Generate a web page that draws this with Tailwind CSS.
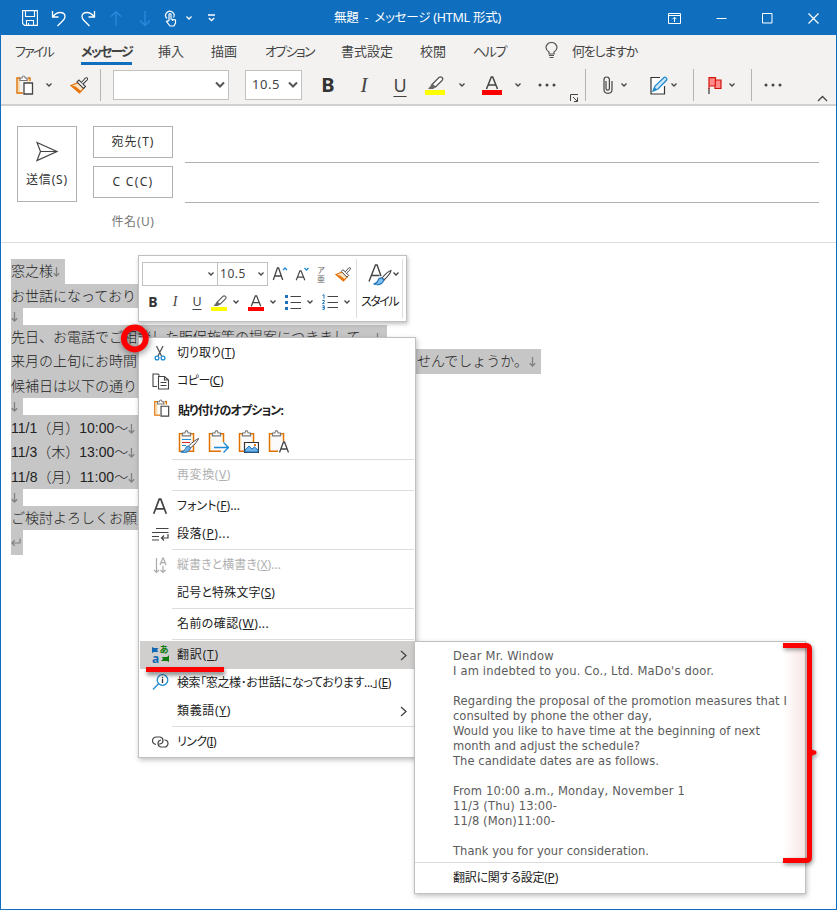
<!DOCTYPE html>
<html lang="ja">
<head>
<meta charset="utf-8">
<title>無題 - メッセージ (HTML 形式)</title>
<script src="https://cdn.jsdelivr.net/npm/@tailwindcss/browser@4"></script>
</head>
<body class="bg-white">
<svg class="hidden">
  <symbol id="caret" viewBox="0 0 8 6"><path d="M1.500 1.500L4 4l2.500-2.500" fill="none" stroke="currentColor" stroke-width="1.300"/></symbol>
  <symbol id="bigcaret" viewBox="0 0 10 8"><path d="M1 1.500L5 5.500l4-4" fill="none" stroke="#555" stroke-width="2"/></symbol>
  <symbol id="painter" viewBox="0 0 18 17"><path d="M1 8.500l7.500-3 5.500 5.500-4.500 5z" fill="#fde3c3" stroke="#e07000" stroke-width="1.200"/><path d="M1 8.500l4.500 1L11 14l-1.500 2z" fill="#e8750a"/><path d="M7 5l2-2 6.500 6.500-2 2z" fill="#fff" stroke="#444" stroke-width="1.100"/><path d="M11.500 5.500l4-4.500q1.500-.5 2 .2.300.7-.3 1.600L13 7" fill="#fff" stroke="#444" stroke-width="1.100"/></symbol>
  <symbol id="paste" viewBox="0 0 19 20"><path d="M5 3H2v15h6M13 3h2v3" fill="none" stroke="#e07000" stroke-width="1.400"/><path d="M3 4h2v13H3zM12 4h2v3h-2z" fill="#fbdcae"/><path d="M5 5.500V3h2q.3-2 1.600-2t1.600 2H12v2.500z" fill="#fff" stroke="#777" stroke-width="1.200"/><path d="M9 8h8.500v11H9z" fill="#fff" stroke="#444" stroke-width="1.300"/></symbol>
  <symbol id="clip" viewBox="0 0 22 24"><path d="M2.500 3.700h14v17.600h-14z" fill="#fafafa" stroke="#e07000" stroke-width="1.500"/><path d="M3.700 4.500V20M15.300 4.500V20" stroke="#fbdcae"/><path d="M5.500 5.800V3h2.400Q8.200.7 9.500.7T11.100 3h2.400v2.800z" fill="#fff" stroke="#777" stroke-width="1.200"/></symbol>
  <symbol id="marker" viewBox="0 0 20 14"><path d="M7 8.500L14 1.500q1.500-1.200 3 0t0 3L10.500 11z" fill="#fff" stroke="#555" stroke-width="1.300"/><path d="M7 8l3.500 3.200L8 13H3z" fill="#666"/></symbol>
  <symbol id="fontA" viewBox="0 0 14 14"><path d="M1.500 13L6.300 1h1.400L12.500 13M3.200 9h7.600" fill="none" stroke="#444" stroke-width="1.500"/></symbol>
</svg>

<div class="relative flex h-[910px] w-[837px] flex-col overflow-hidden border-x border-b border-[#106ebe] bg-white font-['Noto_Sans','Noto_Sans_CJK_JP',sans-serif] text-[12px] text-[#222]">

  <!-- title bar -->
  <header class="flex h-[35px] shrink-0 items-center bg-[#106ebe] pt-px pl-[21px] text-white">
    <svg class="size-[16px]" viewBox="0 0 16 16" fill="none" stroke="#fff" stroke-width="1.100"><path d="M.6.6h14.800v14.800H2.600l-2-2zM3.500.6v5.900h9V.6M4.500 15.400v-4.900h7v4.900M6.500 15v-2"/></svg>
    <svg class="ml-[13px] h-[17px] w-[16px]" viewBox="0 0 16 17" fill="none" stroke="#fff" stroke-width="1.300"><path d="M1.500 1v6h6M1.800 6.800Q5 2.500 9 2.500q5 0 5 4 0 2-2 4L6.500 16"/></svg>
    <svg class="ml-[13px] h-[17px] w-[16px]" viewBox="0 0 16 17" fill="none" stroke="#fff" stroke-width="1.300"><path d="M14.500 1v6h-6M14.200 6.800Q11 2.500 7 2.500q-5 0-5 4 0 2 2 4L9.500 16"/></svg>
    <svg class="ml-[14px] h-[17px] w-[12px]" viewBox="0 0 12 17" fill="none" stroke="#2f8be0" stroke-width="1.200"><path d="M6 16V1.500M1 6.500l5-5 5 5"/></svg>
    <svg class="ml-[17px] h-[17px] w-[12px]" viewBox="0 0 12 17" fill="none" stroke="#2f8be0" stroke-width="1.200"><path d="M6 1v14.500M1 10.500l5 5 5-5"/></svg>
    <svg class="ml-[13px] h-[17px] w-[13px]" viewBox="0 0 13 17" fill="none" stroke="#fff" stroke-width="1.200"><path d="M3 8.500A4.200 4.200 0 1 1 9.500 7.500M5 11V4.500q0-1 1-1t1 1V9l4.500 1v3L10 16H6L2.500 11.500q.7-1.200 2 0M8.500 9v2"/></svg>
    <svg class="-mt-px ml-[8px] h-[6px] w-[8px]"><use href="#caret"/></svg>
    <svg class="ml-[14px] h-[8px] w-[9px]" viewBox="0 0 9 8" fill="none" stroke="#fff" stroke-width="1.300"><path d="M1 1h7M1.800 4l2.700 2.500L7.200 4"/></svg>
    <h1 class="ml-[118px] w-[168px] shrink-0 whitespace-nowrap"><span data-w="167" class="inline-block text-[12.5px] whitespace-nowrap">無題&nbsp; -&nbsp; メッセージ (HTML 形式)</span></h1>
    <svg class="ml-[166px] h-[11px] w-[13px]" viewBox="0 0 13 11" fill="none" stroke="#fff"><path d="M.5.5h12v10H.5zM.5 2.500h12M6.500 9V4.500M4.500 6.200l2-2 2 2"/></svg>
    <svg class="ml-[35px] h-[11px] w-[11px]" viewBox="0 0 11 11" stroke="#fff"><path d="M.5 5.500h10"/></svg>
    <svg class="ml-[35px] h-[11px] w-[11px]" viewBox="0 0 11 11" fill="none" stroke="#fff"><path d="M.5.500h9.500v9.500H.5z"/></svg>
    <svg class="ml-[35px] h-[11px] w-[11px]" viewBox="0 0 11 11" stroke="#fff" stroke-width="1.200"><path d="M.5.500l10 10M10.500.500l-10 10"/></svg>
  </header>

  <!-- ribbon -->
  <section class="flex h-[71px] shrink-0 flex-col border-b-2 border-[#d2d0ce] bg-[#f3f2f1] text-[#444]">
    <nav class="flex h-[31px] items-center pl-[14px] text-[13px] leading-[20px] whitespace-nowrap">
      <span class="w-[66px]"><span data-w="38" class="inline-block">ファイル</span></span>
      <span class="w-[77px]"><b class="relative inline-block" data-w="51">メッセージ<i class="absolute -bottom-[4px] left-0 h-[3px] w-[51px] bg-[#106ebe]"></i></b></span>
      <span class="w-[53px]">挿入</span>
      <span class="w-[54px]">描画</span>
      <span class="w-[76px]"><span data-w="49" class="inline-block">オプション</span></span>
      <span class="w-[79px]">書式設定</span>
      <span class="w-[53px]">校閲</span>
      <span class="w-[72px]"><span data-w="33" class="inline-block">ヘルプ</span></span>
      <svg class="h-[17px] w-[13px]" viewBox="0 0 13 17" fill="none" stroke="#555" stroke-width="1.200"><path d="M4 12v-2Q1 8 1 5.500a5.500 5 0 0 1 11 0Q12 8 9 10v2zM4 13.500h5M4.500 15.500h4"/></svg>
      <span class="ml-[14px]"><span data-w="65" class="inline-block">何をしますか</span></span>
    </nav>
    <div class="flex h-[38px] items-center">
      <svg class="ml-[14px] h-[20px] w-[19px]"><use href="#paste"/></svg>
      <svg class="ml-[11px] h-[6px] w-[8px]"><use href="#caret"/></svg>
      <svg class="ml-[17px] h-[17px] w-[18px]"><use href="#painter"/></svg>
      <i class="ml-[12px] h-[32px] w-px bg-[#b5b3b1]"></i>
      <div class="ml-[12px] flex h-[30px] w-[116px] items-center justify-end border border-[#c1c1c1] bg-white pr-[3px]"><svg class="h-[8px] w-[10px]"><use href="#bigcaret"/></svg></div>
      <div class="ml-[16px] flex h-[30px] w-[57px] items-center justify-between border border-[#c1c1c1] bg-white pr-[3px] pl-[6px]"><span data-w="28" class="inline-block text-[13px]">10.5</span><svg class="h-[8px] w-[10px]"><use href="#bigcaret"/></svg></div>
      <b class="ml-[14px] w-[24px] text-center text-[20px] leading-none text-[#333]">B</b>
      <i class="ml-[12px] w-[24px] text-center font-['Liberation_Serif',serif] text-[21px] leading-none">I</i>
      <span class="ml-[12px] w-[24px] text-center text-[18px] leading-none underline underline-offset-[4px]">U</span>
      <span class="ml-[13px] mt-px w-[20px]"><svg class="h-[14px] w-[20px]"><use href="#marker"/></svg><i class="block h-[5px] bg-[#ff0]"></i></span>
      <svg class="ml-[13px] h-[6px] w-[8px]"><use href="#caret"/></svg>
      <span class="ml-[16px] mt-px w-[20px]"><svg class="mx-auto h-[14px] w-[14px]"><use href="#fontA"/></svg><i class="block h-[5px] bg-[#f00]"></i></span>
      <svg class="ml-[12px] h-[6px] w-[8px]"><use href="#caret"/></svg>
      <svg class="ml-[16px] h-[4px] w-[18px]" viewBox="0 0 18 4" fill="#444"><circle cx="2" cy="2" r="1.500"/><circle cx="9" cy="2" r="1.500"/><circle cx="16" cy="2" r="1.500"/></svg>
      <svg class="mt-[26px] ml-[14px] h-[8px] w-[9px]" viewBox="0 0 9 8" fill="none" stroke="#444"><path d="M.5 7V.5H8M3 3l4 4M7.500 3.500v4H4"/></svg>
      <i class="ml-[6px] h-[32px] w-px bg-[#b5b3b1]"></i>
      <svg class="ml-[17px] h-[18px] w-[10px]" viewBox="0 0 10 18" fill="none" stroke="#444" stroke-width="1.200"><path d="M3 5v7.500q0 1.700 1.700 1.700T6.400 12.500V4Q6.400 1 3.700 1T1 4v9.500Q1 17.300 5 17.300t4-3.800V5"/></svg>
      <svg class="ml-[7px] h-[6px] w-[8px]"><use href="#caret"/></svg>
      <svg class="ml-[22px] h-[19px] w-[18px]" viewBox="0 0 18 19"><path d="M10 1.500H1v16.500h13.500V10" fill="#fff" stroke="#333" stroke-width="1.200"/><path d="M3 15l2-5 9-8.500q1-.8 2.200.4t.3 2.300L8 13z" fill="#cfe6f7" stroke="#1e8ad2" stroke-width="1.300"/><path d="M3 15l1.500-4 2.500 2.500z" fill="#1e8ad2"/></svg>
      <svg class="ml-[2px] h-[6px] w-[8px]"><use href="#caret"/></svg>
      <i class="ml-[15px] h-[32px] w-px bg-[#b5b3b1]"></i>
      <svg class="ml-[14px] h-[19px] w-[14px]" viewBox="0 0 14 19" stroke-width="1.200"><path d="M1 18V12" stroke="#333"/><path d="M1 13V1.600h6.500V4H13v8.500H7V10H1" fill="#ff8b8b" stroke="#d3130a"/><path d="M7.300 4v6" stroke="#d3130a"/></svg>
      <svg class="ml-[6px] h-[6px] w-[8px]"><use href="#caret"/></svg>
      <i class="ml-[15px] h-[32px] w-px bg-[#b5b3b1]"></i>
      <svg class="ml-[12px] h-[4px] w-[18px]" viewBox="0 0 18 4" fill="#444"><circle cx="2" cy="2" r="1.500"/><circle cx="9" cy="2" r="1.500"/><circle cx="16" cy="2" r="1.500"/></svg>
      <svg class="mt-[26px] ml-[35px] h-[7px] w-[11px]" viewBox="0 0 11 7" fill="none" stroke="#444" stroke-width="1.300"><path d="M1 6l4.500-4.500L10 6"/></svg>
    </div>
  </section>

  <!-- addressing -->
  <section class="flex h-[137px] shrink-0 border-b border-[#dedede] pt-[20px] pl-[16px] text-[#333]">
    <button class="flex h-[76px] w-[60px] flex-col items-center border border-[#b3b0ad] pt-[14px]">
      <svg class="h-[21px] w-[24px]" viewBox="0 0 24 21" fill="none" stroke="#444" stroke-width="1.200"><path d="M2 1.500l20 9-20 9 3.500-9zM5.500 10.500H22"/></svg>
      <span class="mt-[8px] leading-[20px]"><span data-w="42" class="inline-block whitespace-nowrap">送信(S)</span></span>
    </button>
    <div class="ml-[16px] flex w-[80px] flex-col items-center">
      <button class="flex h-[32px] w-[80px] items-center justify-center border border-[#b3b0ad]"><span data-w="43" class="inline-block whitespace-nowrap">宛先(T)</span></button>
      <button class="mt-[8px] flex h-[32px] w-[80px] items-center justify-center border border-[#b3b0ad]"><span data-w="41" class="inline-block whitespace-nowrap">C C(C)</span></button>
      <span class="mt-[14px] leading-[20px] text-[#767676]"><span data-w="43" class="inline-block whitespace-nowrap">件名(U)</span></span>
    </div>
    <div class="ml-[12px] w-[634px]">
      <div class="h-[37px] border-b border-[#b3b0ad]"></div>
      <div class="h-[40px] border-b border-[#b3b0ad]"></div>
    </div>
  </section>

  <!-- message body -->
  <main class="flex flex-col items-start pt-[16px] pl-[10px] font-['Liberation_Sans','Noto_Sans_CJK_JP',sans-serif] text-[14px] font-light whitespace-nowrap text-[#222]">
    <p class="h-[25px] w-[54px] bg-[#c6c6c6] leading-[25px]">窓之様<svg class="inline h-[10px] w-[7px]" viewBox="0 0 7 10" fill="none" stroke="#808080" stroke-width="1.300"><path d="M3.500 0v9M.8 6.200L3.500 9l2.700-2.800"/></svg></p>
    <p class="h-[24px] w-[210px] bg-[#c6c6c6] leading-[24px]">お世話になっており</p>
    <p class="h-[17px] w-[12px] bg-[#c6c6c6] leading-[17px]"><svg class="inline h-[10px] w-[7px]" viewBox="0 0 7 10" fill="none" stroke="#808080" stroke-width="1.300"><path d="M3.500 0v9M.8 6.200L3.500 9l2.700-2.800"/></svg></p>
    <p class="h-[24px] w-[376px] bg-[#c6c6c6] leading-[24px]">先日、お電話でご相談した販促施策の提案につきまして、<svg class="inline h-[10px] w-[7px]" viewBox="0 0 7 10" fill="none" stroke="#808080" stroke-width="1.300"><path d="M3.500 0v9M.8 6.200L3.500 9l2.700-2.800"/></svg></p>
    <p class="flex h-[25px] w-[530px] items-center bg-[#c6c6c6] leading-[25px]">来月の上旬にお時間<span class="ml-[280px]">せんでしょうか。</span><svg class="ml-[1px] h-[10px] w-[7px]" viewBox="0 0 7 10" fill="none" stroke="#808080" stroke-width="1.300"><path d="M3.500 0v9M.8 6.200L3.500 9l2.700-2.800"/></svg></p>
    <p class="h-[24px] w-[210px] bg-[#c6c6c6] leading-[24px]">候補日は以下の通り</p>
    <p class="h-[17px] w-[12px] bg-[#c6c6c6] leading-[17px]"><svg class="inline h-[10px] w-[7px]" viewBox="0 0 7 10" fill="none" stroke="#808080" stroke-width="1.300"><path d="M3.500 0v9M.8 6.200L3.500 9l2.700-2.800"/></svg></p>
    <p class="h-[25px] w-[130px] bg-[#c6c6c6] leading-[26px]">11/1（月）10:00～<svg class="inline h-[10px] w-[7px]" viewBox="0 0 7 10" fill="none" stroke="#808080" stroke-width="1.300"><path d="M3.500 0v9M.8 6.200L3.500 9l2.700-2.800"/></svg></p>
    <p class="h-[24px] w-[130px] bg-[#c6c6c6] leading-[25px]">11/3（木）13:00～<svg class="inline h-[10px] w-[7px]" viewBox="0 0 7 10" fill="none" stroke="#808080" stroke-width="1.300"><path d="M3.500 0v9M.8 6.200L3.500 9l2.700-2.800"/></svg></p>
    <p class="h-[25px] w-[130px] bg-[#c6c6c6] leading-[26px]"><span class="tracking-[0.080px]">11/8（月）11:00～</span><svg class="inline h-[10px] w-[7px]" viewBox="0 0 7 10" fill="none" stroke="#808080" stroke-width="1.300"><path d="M3.500 0v9M.8 6.200L3.500 9l2.700-2.800"/></svg></p>
    <p class="h-[17px] w-[12px] bg-[#c6c6c6] leading-[17px]"><svg class="inline h-[10px] w-[7px]" viewBox="0 0 7 10" fill="none" stroke="#808080" stroke-width="1.300"><path d="M3.500 0v9M.8 6.200L3.500 9l2.700-2.800"/></svg></p>
    <p class="h-[24px] w-[210px] bg-[#c6c6c6] leading-[24px]">ご検討よろしくお願</p>
    <p class="flex h-[25px] w-[12px] items-center bg-[#c6c6c6]"><svg class="h-[9px] w-[10px]" viewBox="0 0 10 9" fill="none" stroke="#808080" stroke-width="1.200"><path d="M9 .5V5H1M3.800 2.200L1 5l2.800 2.800"/></svg></p>
  </main>

  <!-- mini toolbar -->
  <div class="absolute top-[255px] left-[137px] flex h-[67px] w-[269px] border border-[#c0c0c0] bg-white pt-[3px] pl-[3px] text-[#444] shadow-[1px_2px_4px_rgba(0,0,0,0.25)]">
    <div class="flex w-[214px] flex-col pt-[3px]">
      <div class="flex h-[24px] items-center">
        <div class="flex h-[24px] w-[76px] items-center justify-end border border-[#c1c1c1] pr-[2px]"><svg class="h-[6px] w-[8px]"><use href="#caret"/></svg></div>
        <div class="-ml-px flex h-[24px] w-[51px] items-center justify-between border border-[#c1c1c1] pr-[2px] pl-[2px]"><span data-w="26" class="inline-block">10.5</span><svg class="h-[6px] w-[8px]"><use href="#caret"/></svg></div>
        <svg class="ml-[4px] h-[14px] w-[12px] shrink-0" preserveAspectRatio="none" viewBox="0 0 14 14"><use href="#fontA"/></svg><svg class="-mt-[10px] h-[5px] w-[5px] shrink-0 overflow-visible" viewBox="0 0 5 5" fill="none" stroke="#1e8ad2" stroke-width="1.300"><path d="M-1 3l2-2 2 2"/></svg>
        <svg class="mt-[2px] ml-[6px] h-[11px] w-[11px] shrink-0"  viewBox="0 0 14 14"><use href="#fontA"/></svg><svg class="-mt-[10px] h-[5px] w-[5px] shrink-0 overflow-visible" viewBox="0 0 5 5" fill="none" stroke="#1e8ad2" stroke-width="1.300"><path d="M-1.500 1l2 2 2-2"/></svg>
        <span class="ml-[6px] flex w-[10px] shrink-0 flex-col text-[8px] leading-[9px] text-[#666]"><span>ア</span><span>亜</span></span>
        <svg class="ml-[8px] h-[15px] w-[16px] shrink-0"><use href="#painter"/></svg>
      </div>
      <div class="mt-[4px] flex h-[24px] items-center">
        <b class="ml-[3px] w-[16px] text-center text-[14px] leading-none text-[#333]">B</b>
        <i class="ml-[6px] w-[16px] text-center font-['Liberation_Serif',serif] text-[14px] leading-none">I</i>
        <span class="ml-[6px] w-[16px] text-center text-[12.5px] leading-none underline underline-offset-[3px]">U</span>
        <span class="ml-[6px] mt-px w-[16px]"><svg class="h-[12px] w-[17px]"><use href="#marker"/></svg><i class="block h-[4px] bg-[#ff0]"></i></span>
        <svg class="ml-[5px] h-[6px] w-[8px]"><use href="#caret"/></svg>
        <span class="ml-[8px] mt-px w-[16px]"><svg class="mx-auto h-[12px] w-[12px]"><use href="#fontA"/></svg><i class="block h-[4px] bg-[#f00]"></i></span>
        <svg class="ml-[5px] h-[6px] w-[8px]"><use href="#caret"/></svg>
        <svg class="ml-[8px] h-[15px] w-[16px]" viewBox="0 0 16 15"><path d="M0 0h3v3H0zM0 6h3v3H0zM0 12h3v3H0z" fill="#1e73ba"/><path d="M5.500 1.500H16M5.500 7.500H16M5.500 13.500H16" stroke="#444"/></svg>
        <svg class="ml-[5px] h-[6px] w-[8px]"><use href="#caret"/></svg>
        <svg class="ml-[8px] h-[16px] w-[16px]" viewBox="0 0 16 16"><path d="M.5 1.500L2 .5v4M.3 6.500h2v1.300L.5 9.600h2M.3 11.800h2v3.500h-2M.5 13.500h1.800" fill="none" stroke="#1e73ba"/><path d="M5.500 2.500H16M5.500 8.500H16M5.500 13.500H16" stroke="#444"/></svg>
        <svg class="ml-[5px] h-[6px] w-[8px]"><use href="#caret"/></svg>
      </div>
    </div>
    <div class="flex h-[59px] w-[47px] flex-col border-x border-[#ddd] pl-[4px]">
      <div class="flex pt-[4px] pl-[7px]"><svg class="h-[23px] w-[24px]" viewBox="0 0 24 23"><path d="M1 18.500L7.500 2h1.600L13 13M3.500 12.500h8" fill="none" stroke="#444" stroke-width="1.400"/><path d="M23 7.500Q20 8 14 15l2 2Q22.500 11 23 7.500z" fill="#fff" stroke="#444" stroke-width="1.100"/><path d="M14 15q-3-.5-4 2.500T5.500 21q8 2.500 10.500-4z" fill="#83beec" stroke="#1e73ba" stroke-width="1.100"/></svg><svg class="mt-[8px] h-[6px] w-[8px]"><use href="#caret"/></svg></div>
      <span class="mt-[7px] leading-[18px]"><span data-w="37" class="inline-block whitespace-nowrap text-[#222]">スタイル</span></span>
    </div>
  </div>

  <!-- context menu -->
  <div class="absolute top-[337px] left-[137px] flex h-[421px] w-[278px] flex-col border border-[#c0c0c0] bg-white px-px pt-px shadow-[1px_2px_5px_rgba(0,0,0,0.25)]">
    <div class="flex h-[28px] items-center"><svg class="ml-[11px] h-[18px] w-[18px]" viewBox="0 0 18 18" fill="none"><path d="M5.500 2l5 10M12 2L7 12" stroke="#555" stroke-width="1.300"/><circle cx="6" cy="14" r="1.900" stroke="#1e8ad2" stroke-width="1.300"/><circle cx="12" cy="14" r="1.900" stroke="#1e8ad2" stroke-width="1.300"/></svg><span data-w="58" class="ml-[8px] inline-block whitespace-nowrap">切り取り(<u>T</u>)</span></div>
    <div class="flex h-[28px] items-center"><svg class="ml-[12px] h-[17px] w-[18px]" viewBox="0 0 18 17" fill="none" stroke="#444" stroke-width="1.100"><path d="M5 13.500H1V1h5l1.500 1.500M6.500 3.500h6L16.500 7v9h-10zM12.500 3.500V7h4M8.500 9.500h6M8.500 12.500h6"/></svg><span data-w="46" class="ml-[7px] inline-block whitespace-nowrap">コピー(<u>C</u>)</span></div>
    <div class="flex h-[30px] items-center"><svg class="-mt-[4px] ml-[13px] h-[18px] w-[17px]" viewBox="0 0 19 20"><use href="#paste"/></svg><b data-w="105" class="mt-[2px] ml-[8px] inline-block whitespace-nowrap">貼り付けのオプション:</b></div>
    <div class="flex h-[33px] items-center gap-[8px] pl-[37px]">
      <span class="relative h-[24px] w-[22px]"><svg class="h-[24px] w-[22px]"><use href="#clip"/></svg><svg class="absolute top-0 left-0 h-[24px] w-[22px]" viewBox="0 0 22 24"><path d="M5 9.500h9M5 15.500h4" stroke="#1e8ad2"/><path d="M5 12.500h8" stroke="#e02020"/><path d="M21.500 8.500Q18 10 11.500 16l2 2q7-6 8-9.500z" fill="#fff" stroke="#444"/><path d="M11.500 16q-2.500 0-3 2.500T3.800 22q8 2 9.700-4z" fill="#6db2e8" stroke="#1e73ba"/></svg></span>
      <span class="relative h-[24px] w-[22px]"><svg class="h-[24px] w-[22px]"><use href="#clip"/></svg><svg class="absolute top-0 left-0 h-[24px] w-[22px]" viewBox="0 0 22 24"><path d="M14 12h8v11h-8z" fill="#fff"/><path d="M7 17.500h14M16.500 12.500l5 5-5 5" fill="none" stroke="#1e8ad2" stroke-width="1.400"/></svg></span>
      <span class="relative h-[24px] w-[22px]"><svg class="h-[24px] w-[22px]"><use href="#clip"/></svg><svg class="absolute top-0 left-0 h-[24px] w-[22px]" viewBox="0 0 22 24"><path d="M7.500 12.500h14v10h-14z" fill="#fff" stroke="#333" stroke-width="1.200"/><path d="M8 20l4-4 3 3 2.500-2 3.500 3v2H8z" fill="#6db2e8" stroke="#1e73ba"/><path d="M17 14h2v2h-2z" fill="#e8750a"/></svg></span>
      <span class="relative h-[24px] w-[22px]"><svg class="h-[24px] w-[22px]"><use href="#clip"/></svg><svg class="absolute top-0 left-0 h-[24px] w-[22px]" viewBox="0 0 22 24"><path d="M10.500 23L14 11h4l4 12z" fill="#fff"/><path d="M12.500 22.500L16.500 12h1l4 10.500M13.800 19h6.500" fill="none" stroke="#444" stroke-width="1.300"/></svg></span>
    </div>
    <hr class="my-px ml-[32px] border-[#dcdcdc]">
    <div class="flex h-[28px] items-center text-[#b0b0b0]"><span data-w="54" class="ml-[37px] inline-block whitespace-nowrap">再変換(<u>V</u>)</span></div>
    <hr class="my-px ml-[32px] border-[#dcdcdc]">
    <div class="flex h-[28px] items-center"><svg class="ml-[12px] h-[17px] w-[16px]" viewBox="0 0 14 14" preserveAspectRatio="none"><use href="#fontA"/></svg><span data-w="63" class="ml-[9px] inline-block whitespace-nowrap">フォント(<u>F</u>)...</span></div>
    <div class="flex h-[28px] items-center"><svg class="ml-[12px] h-[14px] w-[17px]" viewBox="0 0 17 14" fill="none" stroke="#444" stroke-width="1.200"><path d="M4 1.500h12.500M0 5.500h16.500M0 9.500h7M0 13h7M16 7v4H9.500M12 8.500L9.500 11l2.500 2.500"/></svg><span data-w="53" class="ml-[8px] inline-block whitespace-nowrap">段落(<u>P</u>)...</span></div>
    <hr class="my-px ml-[32px] border-[#dcdcdc]">
    <div class="flex h-[28px] items-center text-[#b0b0b0]"><svg class="ml-[13px] h-[17px] w-[15px]" viewBox="0 0 15 17" fill="none" stroke="#aaa" stroke-width="1.200"><path d="M3.500 1v14.500M1 13l2.500 2.500L6 13M7 8l2.800-7h.6L13 8M8 5.700h4M10 9v6.500M7.500 13l2.500 2.500 2.500-2.500"/></svg><span data-w="104" class="ml-[9px] inline-block whitespace-nowrap">縦書きと横書き(<u>X</u>)...</span></div>
    <div class="flex h-[28px] items-center"><span data-w="98" class="ml-[37px] inline-block whitespace-nowrap">記号と特殊文字(<u>S</u>)</span></div>
    <hr class="my-px ml-[32px] border-[#dcdcdc]">
    <div class="flex h-[28px] items-center"><span data-w="92" class="ml-[37px] inline-block whitespace-nowrap">名前の確認(<u>W</u>)...</span></div>
    <hr class="my-px ml-[32px] border-[#dcdcdc]">
    <div class="flex h-[28px] items-center bg-[#d0cfce]"><span class="-mt-px ml-[12px] grid w-[17px] grid-cols-2 text-[9px] leading-[8px] font-bold"><svg class="h-[8px] w-[7px]" viewBox="0 0 7 8"><path d="M0 1l2 1h4.500L5 4l1.500 2H2L0 7z" fill="#1267b4"/></svg><span class="-ml-[1px] text-[#107c10]">あ</span><span class="text-[12px] leading-[9px] text-[#1267b4]">a</span><svg class="mt-px h-[8px] w-[8px]" viewBox="0 0 8 8"><path d="M8 0v7L6 6H0l2-2-1-2h5z" fill="#107c10"/></svg></span><span data-w="42" class="ml-[8px] inline-block whitespace-nowrap">翻訳(<u>T</u>)</span><svg class="mr-[6px] ml-auto h-[11px] w-[8px]" viewBox="0 0 8 11" fill="none" stroke="#444" stroke-width="1.300"><path d="M1 1l5 4.500L1 10"/></svg></div>
    <div class="flex h-[28px] items-center"><svg class="-mt-[2px] ml-[12px] h-[17px] w-[17px]" viewBox="0 0 17 17" fill="none" stroke="#1e8ad2" stroke-width="1.300"><circle cx="10.500" cy="6" r="5.300"/><path d="M6.500 9.800L1 15.500"/><path d="M10.500 5v4M10.500 3v1.200" stroke="#333"/></svg><span data-w="214" class="ml-[8px] inline-block whitespace-nowrap">検索「窓之様･お世話になっております...」(<u>E</u>)</span></div>
    <div class="flex h-[28px] items-center"><span data-w="54" class="ml-[37px] inline-block whitespace-nowrap">類義語(<u>Y</u>)</span><svg class="mr-[6px] ml-auto h-[11px] w-[8px]" viewBox="0 0 8 11" fill="none" stroke="#444" stroke-width="1.300"><path d="M1 1l5 4.500L1 10"/></svg></div>
    <hr class="my-px ml-[32px] border-[#dcdcdc]">
    <div class="flex h-[28px] items-center"><svg class="ml-[12px] h-[12px] w-[17px]" viewBox="0 0 17 12" fill="none" stroke="#444" stroke-width="1.200"><path d="M4 8.500a3.700 3.700 0 1 1 .5-7.500H8q3 .5 3 3.500T8 8H7M12.500 4a3.500 3.500 0 1 1 0 7H9q-3-.5-3-3.500T9 4"/></svg><span data-w="39" class="ml-[8px] inline-block whitespace-nowrap">リンク(<u>I</u>)</span></div>
  </div>

  <!-- translation submenu -->
  <div class="absolute top-[641px] left-[413px] flex h-[253px] w-[392px] flex-col border border-[#c0c0c0] bg-white pt-[5px] shadow-[1px_2px_5px_rgba(0,0,0,0.25)]">
    <div class="h-[215px] pt-px pl-[38px] font-['DejaVu_Sans_Condensed','DejaVu_Sans',sans-serif] text-[12.8px] leading-[15px] font-stretch-condensed whitespace-nowrap text-[#5c5c5c]">
      <div class="h-[15px]"><span data-w="101" class="inline-block">Dear Mr. Window</span></div>
      <div class="h-[15px]"><span data-w="261" class="inline-block">I am indebted to you. Co., Ltd. MaDo's door.</span></div>
      <div class="h-[15px]"></div>
      <div class="h-[15px]"><span data-w="334" class="inline-block">Regarding the proposal of the promotion measures that I</span></div>
      <div class="h-[15px]"><span data-w="199" class="inline-block">consulted by phone the other day,</span></div>
      <div class="h-[15px]"><span data-w="307" class="inline-block">Would you like to have time at the beginning of next</span></div>
      <div class="h-[15px]"><span data-w="187" class="inline-block">month and adjust the schedule?</span></div>
      <div class="h-[15px]"><span data-w="206" class="inline-block">The candidate dates are as follows.</span></div>
      <div class="h-[15px]"></div>
      <div class="h-[15px]"><span data-w="232" class="inline-block">From 10:00 a.m., Monday, November 1</span></div>
      <div class="h-[15px]"><span data-w="104" class="inline-block">11/3 (Thu) 13:00-</span></div>
      <div class="h-[15px]"><span data-w="102" class="inline-block">11/8 (Mon)11:00-</span></div>
      <div class="h-[15px]"></div>
      <div class="h-[15px]"><span data-w="196" class="inline-block">Thank you for your consideration.</span></div>
    </div>
    <hr class="border-[#dcdcdc]">
    <div class="flex h-[30px] items-center pl-[38px]"><span data-w="105" class="inline-block whitespace-nowrap">翻訳に関する設定(<u>P</u>)</span></div>
  </div>

  <!-- annotations -->
  <svg class="absolute top-[320px] left-[116px] h-[40px] w-[40px] drop-shadow-[1px_2px_3px_rgba(0,0,0,0.45)]" viewBox="0 0 40 40"><circle cx="17.800" cy="18.500" r="11" fill="none" stroke="#f00" stroke-width="5.800"/></svg>
  <div class="absolute top-[667px] left-[145px] h-[5px] w-[78px] bg-[#f00] shadow-[1px_3px_4px_rgba(0,0,0,0.5)]"></div>
  <div class="absolute top-[645px] left-[782px] h-[216px] w-[25px] bg-linear-to-r from-[#f00]/0 to-[#d04040]/15"></div>
  <svg class="absolute top-[640px] left-[780px] h-[230px] w-[42px] drop-shadow-[1px_2px_2px_rgba(0,0,0,0.4)]" viewBox="0 0 42 230"><path d="M2 5.500H25Q28.500 5.500 28.500 9V217Q28.500 220.500 25 220.500H2" fill="none" stroke="#f00" stroke-width="5"/><path d="M30 107q1 3.500 4 3.500 1.500 0 1.500 2t-1.500 2q-3 0-4 3.500z" fill="#f00"/></svg>
</div>
<script>
  // Spread each label over its designed width once the styles have settled.
  function fitLabels() {
    document.querySelectorAll('[data-w]').forEach(el => {
      const family = getComputedStyle(el).fontFamily;
      el.style.fontFeatureSettings = family.includes('CJK') ? '"palt"' : 'normal';
      el.style.letterSpacing = '0px';
      const w = el.getBoundingClientRect().width;
      el.style.letterSpacing = ((Number(el.dataset.w) - w) / el.textContent.length).toFixed(3) + 'px';
    });
  }
  fitLabels();
  window.addEventListener('load', () => { fitLabels(); requestAnimationFrame(fitLabels); });
  document.fonts.ready.then(fitLabels);
</script>
</body>
</html>
